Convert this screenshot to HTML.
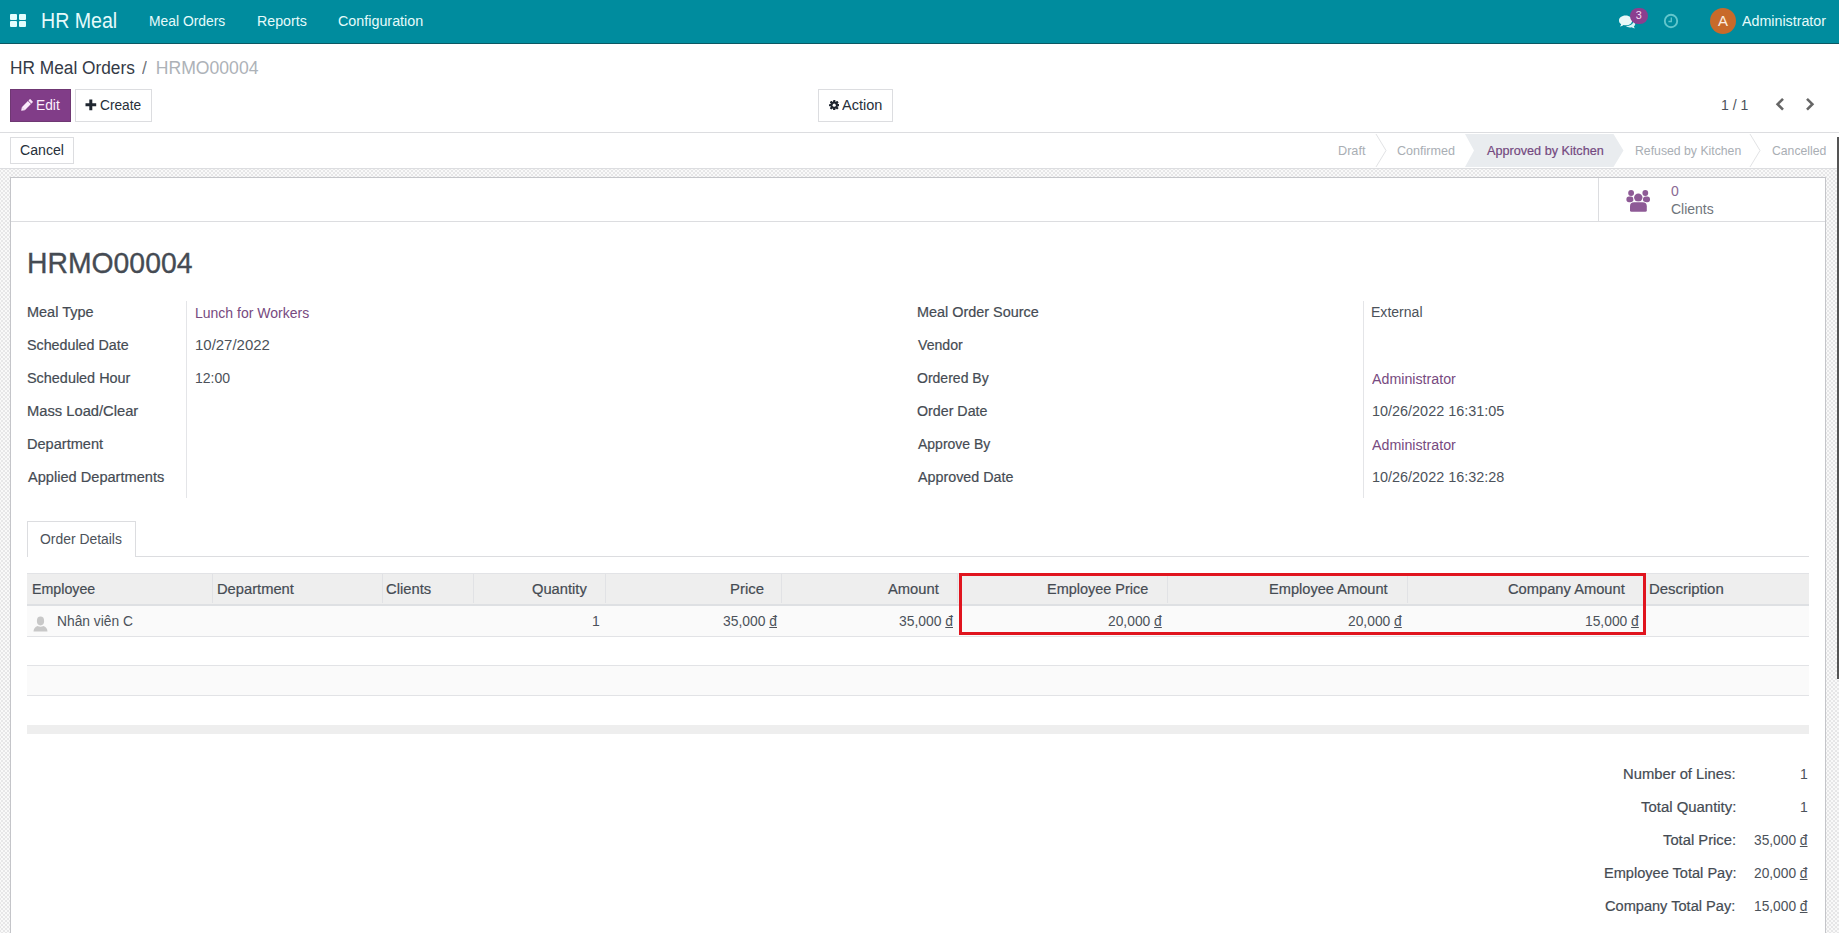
<!DOCTYPE html>
<html><head><meta charset="utf-8"><title>HR Meal Orders</title>
<style>
html,body{margin:0;padding:0;width:1839px;height:933px;overflow:hidden;background:#fff;}
body{position:relative;font-family:"Liberation Sans", sans-serif;}
.t{position:absolute;white-space:nowrap;line-height:1;transform-origin:0 0;}
.u{text-decoration:underline;text-underline-offset:1px;}
.checker{background:repeating-conic-gradient(#e6e6e7 0% 25%,#f9f9f9 0% 50%) 1px 1px/4px 4px;}
</style></head><body>
<div class="checker" style="position:absolute;left:0;top:169px;width:1839px;height:764px"></div>
<div style="position:absolute;left:10px;top:177px;width:1816px;height:800px;background:#fff;border:1px solid #c4c5c9;box-sizing:border-box"></div>
<div style="position:absolute;left:0px;top:0px;width:1839px;height:43px;background:#008c9e"></div>
<div style="position:absolute;left:0px;top:43px;width:1839px;height:1px;background:#0b5863"></div>
<div style="position:absolute;left:0px;top:132px;width:1839px;height:1px;background:#dcdde0"></div>
<div style="position:absolute;left:0px;top:168px;width:1839px;height:1px;background:#dcdde0"></div>
<div style="position:absolute;left:10px;top:14px;width:7px;height:6px;background:#e3fdfd;border-radius:1px"></div>
<div style="position:absolute;left:19px;top:14px;width:7px;height:6px;background:#e3fdfd;border-radius:1px"></div>
<div style="position:absolute;left:10px;top:21px;width:7px;height:6px;background:#e3fdfd;border-radius:1px"></div>
<div style="position:absolute;left:19px;top:21px;width:7px;height:6px;background:#e3fdfd;border-radius:1px"></div>
<svg style="position:absolute;left:1617px;top:13px" width="22" height="17" viewBox="0 0 22 17">
<path d="M9 12.2 C12.6 12.2 15.2 10 15.2 7.4 C15.2 4.8 12.6 2.4 8.6 2.4 C4.6 2.4 2 4.8 2 7.4 C2 9 2.8 10.3 4.2 11.2 C4 12.2 3.4 12.8 2.8 13.4 C4.3 13.4 5.8 12.8 6.6 12 C7.4 12.1 8.2 12.2 9 12.2 Z" fill="#e9f8f8"/>
<path d="M16.4 8.2 C17.6 8.8 18.2 9.8 18.2 11 C18.2 12 17.7 12.8 16.8 13.5 C17 14.3 17.6 14.8 18 15.2 C16.8 15.2 15.6 14.8 14.9 14.2 C14.3 14.3 13.7 14.4 13 14.4 C11.3 14.4 9.8 13.8 8.9 13 C12.8 13 16.4 11 16.4 8.2 Z" fill="#d8f6f6"/>
</svg>
<div style="position:absolute;left:1630px;top:8px;width:18px;height:16px;background:#8b3f8f;border-radius:8px"></div>
<svg style="position:absolute;left:1663px;top:12.8px" width="16" height="16" viewBox="0 0 16 16">
<circle cx="8" cy="8" r="6.2" fill="none" stroke="#62c6cc" stroke-width="1.9"/>
<path d="M8.3 4.4 V8.5 H5.4" fill="none" stroke="#62c6cc" stroke-width="1.3"/>
</svg>
<div style="position:absolute;left:1710px;top:8px;width:26px;height:26px;background:#c86a2a;border-radius:50%"></div>
<div style="position:absolute;left:10px;top:89px;width:61px;height:33px;background:#813d88;border:1px solid #6f3873;box-sizing:border-box"></div>
<svg style="position:absolute;left:19px;top:97px" width="16" height="16" viewBox="0 0 16 16">
<g transform="translate(8 8) rotate(-45)" fill="#fbe9fb">
<path d="M-8.2 0 L-5.2 -2.15 V2.15 Z"/>
<rect x="-5.2" y="-2.15" width="8.6" height="4.3"/>
<rect x="4.1" y="-2.15" width="2.4" height="4.3" rx="0.6"/>
</g></svg>
<div style="position:absolute;left:75px;top:89px;width:77px;height:33px;background:#fff;border:1px solid #dcdde0;box-sizing:border-box"></div>
<svg style="position:absolute;left:85px;top:98.5px" width="12" height="12" viewBox="0 0 12 12">
<path d="M4.3 0.5 H7.3 V4.3 H11.2 V7.3 H7.3 V11.3 H4.3 V7.3 H0.5 V4.3 H4.3 Z" fill="#1f2630"/>
</svg>
<div style="position:absolute;left:818px;top:89px;width:75px;height:33px;background:#fff;border:1px solid #dcdde0;box-sizing:border-box"></div>
<svg style="position:absolute;left:829px;top:99.6px" width="10.4" height="10.4" viewBox="0 0 11 11">
<g fill="#1f2630"><circle cx="5.5" cy="5.5" r="3.8"/>
<rect x="4.3" y="0" width="2.4" height="11" rx="0.5"/><rect x="0" y="4.3" width="11" height="2.4" rx="0.5"/>
<rect x="4.3" y="0" width="2.4" height="11" rx="0.5" transform="rotate(45 5.5 5.5)"/><rect x="4.3" y="0" width="2.4" height="11" rx="0.5" transform="rotate(-45 5.5 5.5)"/></g>
<circle cx="5.5" cy="5.5" r="1.7" fill="#fff"/>
</svg>
<svg style="position:absolute;left:1774px;top:97px" width="44" height="15" viewBox="0 0 44 15">
<path d="M9 1.8 L3.6 7.2 L9 12.6" fill="none" stroke="#666" stroke-width="2.6"/>
<path d="M33 1.8 L38.4 7.2 L33 12.6" fill="none" stroke="#666" stroke-width="2.6"/>
</svg>
<div style="position:absolute;left:10px;top:137px;width:64px;height:27px;background:#fff;border:1px solid #dcdde0;box-sizing:border-box"></div>
<svg style="position:absolute;left:1300px;top:133px" width="539" height="35" viewBox="0 0 539 35">
<path d="M165 1 H313.5 L323.5 17.5 L313.5 34 H165 L174 17.5 Z" fill="#e9ecef"/>
<path d="M76 1 L86 17.5 L76 34" fill="none" stroke="#e2e3e5" stroke-width="1"/>
<path d="M450 1 L460 17.5 L450 34" fill="none" stroke="#e2e3e5" stroke-width="1"/>
</svg>
<div style="position:absolute;left:11px;top:221px;width:1814px;height:1px;background:#dcdde0"></div>
<div style="position:absolute;left:1598px;top:178px;width:1px;height:43px;background:#dcdde0"></div>
<svg style="position:absolute;left:1626px;top:189px" width="25" height="23" viewBox="0 0 25 23">
<g fill="#8e5a96">
<circle cx="5.1" cy="4" r="2.9"/><circle cx="19.3" cy="4" r="2.9"/>
<rect x="0.4" y="7.6" width="7" height="5.6" rx="2.6"/><rect x="17" y="7.6" width="7" height="5.6" rx="2.6"/>
<circle cx="12.3" cy="8.6" r="4.2" stroke="#fff" stroke-width="1.4" paint-order="stroke"/>
<path d="M4 21.2 V17.3 Q4 13.2 8.2 13.2 H16.6 Q20.8 13.2 20.8 17.3 V21.2 Q20.8 22.7 19.3 22.7 H5.5 Q4 22.7 4 21.2 Z" stroke="#fff" stroke-width="1.4" paint-order="stroke"/>
</g></svg>
<div style="position:absolute;left:186px;top:301px;width:1px;height:197px;background:#e4e5e8"></div>
<div style="position:absolute;left:1363px;top:301px;width:1px;height:197px;background:#e4e5e8"></div>
<div style="position:absolute;left:27px;top:556px;width:1782px;height:1px;background:#dcdde0"></div>
<div style="position:absolute;left:27px;top:521px;width:109px;height:36px;background:#fff;border:1px solid #dcdde0;border-bottom:none;box-sizing:border-box"></div>
<div style="position:absolute;left:27px;top:573px;width:1782px;height:31px;background:#eeeeee"></div>
<div style="position:absolute;left:27px;top:573px;width:1782px;height:1px;background:#e2e3e6"></div>
<div style="position:absolute;left:27px;top:604px;width:1782px;height:2px;background:#dee0e3"></div>
<div style="position:absolute;left:212px;top:574px;width:1px;height:29px;background:#e1e2e5"></div>
<div style="position:absolute;left:382px;top:574px;width:1px;height:29px;background:#e1e2e5"></div>
<div style="position:absolute;left:473px;top:574px;width:1px;height:29px;background:#e1e2e5"></div>
<div style="position:absolute;left:605px;top:574px;width:1px;height:29px;background:#e1e2e5"></div>
<div style="position:absolute;left:781px;top:574px;width:1px;height:29px;background:#e1e2e5"></div>
<div style="position:absolute;left:957px;top:574px;width:1px;height:29px;background:#e1e2e5"></div>
<div style="position:absolute;left:1167px;top:574px;width:1px;height:29px;background:#e1e2e5"></div>
<div style="position:absolute;left:1407px;top:574px;width:1px;height:29px;background:#e1e2e5"></div>
<div style="position:absolute;left:1645px;top:574px;width:1px;height:29px;background:#e1e2e5"></div>
<div style="position:absolute;left:27px;top:606px;width:1782px;height:30px;background:#fafafa"></div>
<div style="position:absolute;left:27px;top:636px;width:1782px;height:1px;background:#e2e3e6"></div>
<svg style="position:absolute;left:33px;top:616px" width="15" height="16" viewBox="0 0 15 16">
<g fill="#c8c8c8"><ellipse cx="7.5" cy="5" rx="3.6" ry="4.4"/><path d="M0.5 15.5 Q0.8 11 4.6 10 Q7.5 11.6 10.4 10 Q14.2 11 14.5 15.5 Z"/></g></svg>
<div style="position:absolute;left:27px;top:665px;width:1782px;height:1px;background:#e2e3e6"></div>
<div style="position:absolute;left:27px;top:666px;width:1782px;height:29px;background:#fafafa"></div>
<div style="position:absolute;left:27px;top:695px;width:1782px;height:1px;background:#e2e3e6"></div>
<div style="position:absolute;left:27px;top:725px;width:1782px;height:9px;background:#eeeeee"></div>
<div class="t" style="left:41.19px;top:10px;font-size:21.6px;color:#e6fbfb;transform:scaleX(0.9074);">HR Meal</div>
<div class="t" style="left:148.58px;top:13px;font-size:15.1px;color:#e6fbfb;transform:scaleX(0.9183);">Meal Orders</div>
<div class="t" style="left:256.86px;top:13px;font-size:15.1px;color:#e6fbfb;transform:scaleX(0.9431);">Reports</div>
<div class="t" style="left:337.75px;top:13px;font-size:15.1px;color:#e6fbfb;transform:scaleX(0.9489);">Configuration</div>
<div class="t" style="left:1741.60px;top:13px;font-size:15.1px;color:#e6fbfb;transform:scaleX(0.9449);">Administrator</div>
<div class="t" style="left:1635.70px;top:10px;font-size:10.8px;color:#f5dcf5;">3</div>
<div class="t" style="left:1718.00px;top:13px;font-size:15px;color:#fbeee0;">A</div>
<div class="t" style="left:10.02px;top:60px;font-size:17.6px;color:#343a46;transform:scaleX(0.9825);">HR Meal Orders</div>
<div class="t" style="left:142.40px;top:60px;font-size:17.6px;color:#6f747a;transform:scaleX(0.9908);">/</div>
<div class="t" style="left:155.80px;top:60px;font-size:17.6px;color:#adb2b8;">HRMO00004</div>
<div class="t" style="left:36.09px;top:97px;font-size:15.1px;color:#fdf0fd;transform:scaleX(0.9120);">Edit</div>
<div class="t" style="left:100.09px;top:97px;font-size:15.1px;color:#27303a;transform:scaleX(0.9091);">Create</div>
<div class="t" style="left:842.20px;top:97px;font-size:15.1px;color:#27303a;transform:scaleX(0.9610);">Action</div>
<div class="t" style="left:1720.57px;top:97px;font-size:15.1px;color:#4c525a;transform:scaleX(0.9286);">1 / 1</div>
<div class="t" style="left:20.26px;top:142px;font-size:15.1px;color:#27303a;transform:scaleX(0.9356);">Cancel</div>
<div class="t" style="left:1338.25px;top:144px;font-size:13.4px;color:#a9aeb4;transform:scaleX(0.9464);">Draft</div>
<div class="t" style="left:1397.36px;top:144px;font-size:13.4px;color:#a9aeb4;transform:scaleX(0.9383);">Confirmed</div>
<div class="t" style="left:1487.20px;top:144px;font-size:13.4px;color:#74497f;-webkit-text-stroke:0.2px #74497f;transform:scaleX(0.9447);">Approved by Kitchen</div>
<div class="t" style="left:1634.79px;top:144px;font-size:13.4px;color:#a9aeb4;transform:scaleX(0.9149);">Refused by Kitchen</div>
<div class="t" style="left:1771.69px;top:144px;font-size:13.4px;color:#a9aeb4;transform:scaleX(0.9121);">Cancelled</div>
<div class="t" style="left:1670.87px;top:183px;font-size:15.1px;color:#8a6a94;transform:scaleX(0.9291);">0</div>
<div class="t" style="left:1670.87px;top:201px;font-size:15.1px;color:#6f757c;transform:scaleX(0.9267);">Clients</div>
<div class="t" style="left:26.60px;top:248px;font-size:29.9px;color:#454b53;-webkit-text-stroke:0.35px #454b53;transform:scaleX(0.9483);">HRMO00004</div>
<div class="t" style="left:27.04px;top:304px;font-size:15.1px;color:#454b53;-webkit-text-stroke:0.2px #454b53;transform:scaleX(0.9588);">Meal Type</div>
<div class="t" style="left:27.05px;top:337px;font-size:15.1px;color:#454b53;-webkit-text-stroke:0.2px #454b53;transform:scaleX(0.9462);">Scheduled Date</div>
<div class="t" style="left:27.04px;top:370px;font-size:15.1px;color:#454b53;-webkit-text-stroke:0.2px #454b53;transform:scaleX(0.9551);">Scheduled Hour</div>
<div class="t" style="left:27.02px;top:403px;font-size:15.1px;color:#454b53;-webkit-text-stroke:0.2px #454b53;transform:scaleX(0.9752);">Mass Load/Clear</div>
<div class="t" style="left:27.04px;top:436px;font-size:15.1px;color:#454b53;-webkit-text-stroke:0.2px #454b53;transform:scaleX(0.9641);">Department</div>
<div class="t" style="left:27.60px;top:469px;font-size:15.1px;color:#454b53;-webkit-text-stroke:0.2px #454b53;transform:scaleX(0.9667);">Applied Departments</div>
<div class="t" style="left:194.67px;top:305px;font-size:15.1px;color:#774a80;transform:scaleX(0.9279);">Lunch for Workers</div>
<div class="t" style="left:194.91px;top:337px;font-size:15.1px;color:#4c525a;transform:scaleX(0.9905);">10/27/2022</div>
<div class="t" style="left:194.77px;top:370px;font-size:15.1px;color:#4c525a;transform:scaleX(0.9306);">12:00</div>
<div class="t" style="left:917.45px;top:304px;font-size:15.1px;color:#454b53;-webkit-text-stroke:0.2px #454b53;transform:scaleX(0.9548);">Meal Order Source</div>
<div class="t" style="left:918.40px;top:337px;font-size:15.1px;color:#454b53;-webkit-text-stroke:0.2px #454b53;transform:scaleX(0.9354);">Vendor</div>
<div class="t" style="left:917.47px;top:370px;font-size:15.1px;color:#454b53;-webkit-text-stroke:0.2px #454b53;transform:scaleX(0.9289);">Ordered By</div>
<div class="t" style="left:917.46px;top:403px;font-size:15.1px;color:#454b53;-webkit-text-stroke:0.2px #454b53;transform:scaleX(0.9438);">Order Date</div>
<div class="t" style="left:918.40px;top:436px;font-size:15.1px;color:#454b53;-webkit-text-stroke:0.2px #454b53;transform:scaleX(0.9269);">Approve By</div>
<div class="t" style="left:918.40px;top:469px;font-size:15.1px;color:#454b53;-webkit-text-stroke:0.2px #454b53;transform:scaleX(0.9470);">Approved Date</div>
<div class="t" style="left:1371.27px;top:304px;font-size:15.1px;color:#4c525a;transform:scaleX(0.9302);">External</div>
<div class="t" style="left:1372.20px;top:371px;font-size:15.1px;color:#774a80;transform:scaleX(0.9427);">Administrator</div>
<div class="t" style="left:1371.64px;top:403px;font-size:15.1px;color:#4c525a;transform:scaleX(0.9555);">10/26/2022 16:31:05</div>
<div class="t" style="left:1372.20px;top:437px;font-size:15.1px;color:#774a80;transform:scaleX(0.9427);">Administrator</div>
<div class="t" style="left:1371.64px;top:469px;font-size:15.1px;color:#4c525a;transform:scaleX(0.9555);">10/26/2022 16:32:28</div>
<div class="t" style="left:40.48px;top:531px;font-size:15.1px;color:#4c525a;transform:scaleX(0.9207);">Order Details</div>
<div class="t" style="left:31.86px;top:581px;font-size:15.1px;color:#454b53;-webkit-text-stroke:0.2px #454b53;transform:scaleX(0.9424);">Employee</div>
<div class="t" style="left:216.63px;top:581px;font-size:15.1px;color:#454b53;-webkit-text-stroke:0.2px #454b53;transform:scaleX(0.9744);">Department</div>
<div class="t" style="left:386.32px;top:581px;font-size:15.1px;color:#454b53;-webkit-text-stroke:0.2px #454b53;transform:scaleX(0.9778);">Clients</div>
<div class="t" style="left:532.03px;top:581px;font-size:15.1px;color:#454b53;-webkit-text-stroke:0.2px #454b53;transform:scaleX(0.9745);">Quantity</div>
<div class="t" style="left:729.51px;top:581px;font-size:15.1px;color:#454b53;-webkit-text-stroke:0.2px #454b53;transform:scaleX(0.9879);">Price</div>
<div class="t" style="left:888.20px;top:581px;font-size:15.1px;color:#454b53;-webkit-text-stroke:0.2px #454b53;transform:scaleX(0.9750);">Amount</div>
<div class="t" style="left:1047.44px;top:581px;font-size:15.1px;color:#454b53;-webkit-text-stroke:0.2px #454b53;transform:scaleX(0.9577);">Employee Price</div>
<div class="t" style="left:1269.23px;top:581px;font-size:15.1px;color:#454b53;-webkit-text-stroke:0.2px #454b53;transform:scaleX(0.9680);">Employee Amount</div>
<div class="t" style="left:1508.33px;top:581px;font-size:15.1px;color:#454b53;-webkit-text-stroke:0.2px #454b53;transform:scaleX(0.9731);">Company Amount</div>
<div class="t" style="left:1648.51px;top:581px;font-size:15.1px;color:#454b53;-webkit-text-stroke:0.2px #454b53;transform:scaleX(0.9892);">Description</div>
<div class="t" style="left:57.09px;top:613px;font-size:15.1px;color:#4c525a;transform:scaleX(0.9136);">Nhân viên C</div>
<div class="t" style="left:592.17px;top:613px;font-size:15.1px;color:#4c525a;transform:scaleX(0.9291);">1</div>
<div class="t" style="left:723.08px;top:613px;font-size:15.1px;color:#4c525a;transform:scaleX(0.9190);">35,000 <span class="u">đ</span></div>
<div class="t" style="left:899.28px;top:613px;font-size:15.1px;color:#4c525a;transform:scaleX(0.9190);">35,000 <span class="u">đ</span></div>
<div class="t" style="left:1108.08px;top:613px;font-size:15.1px;color:#4c525a;transform:scaleX(0.9155);">20,000 <span class="u">đ</span></div>
<div class="t" style="left:1348.28px;top:613px;font-size:15.1px;color:#4c525a;transform:scaleX(0.9155);">20,000 <span class="u">đ</span></div>
<div class="t" style="left:1585.38px;top:613px;font-size:15.1px;color:#4c525a;transform:scaleX(0.9155);">15,000 <span class="u">đ</span></div>
<div class="t" style="left:1623.32px;top:766px;font-size:15.1px;color:#454b53;-webkit-text-stroke:0.2px #454b53;transform:scaleX(0.9788);">Number of Lines:</div>
<div class="t" style="left:1641.00px;top:799px;font-size:15.1px;color:#454b53;-webkit-text-stroke:0.2px #454b53;transform:scaleX(0.9884);">Total Quantity:</div>
<div class="t" style="left:1662.50px;top:832px;font-size:15.1px;color:#454b53;-webkit-text-stroke:0.2px #454b53;transform:scaleX(0.9784);">Total Price:</div>
<div class="t" style="left:1603.63px;top:865px;font-size:15.1px;color:#454b53;-webkit-text-stroke:0.2px #454b53;transform:scaleX(0.9652);">Employee Total Pay:</div>
<div class="t" style="left:1605.43px;top:898px;font-size:15.1px;color:#454b53;-webkit-text-stroke:0.2px #454b53;transform:scaleX(0.9662);">Company Total Pay:</div>
<div class="t" style="left:1799.77px;top:766px;font-size:15.1px;color:#4c525a;transform:scaleX(0.9291);">1</div>
<div class="t" style="left:1799.77px;top:799px;font-size:15.1px;color:#4c525a;transform:scaleX(0.9291);">1</div>
<div class="t" style="left:1754.29px;top:832px;font-size:15.1px;color:#4c525a;transform:scaleX(0.9103);">35,000 <span class="u">đ</span></div>
<div class="t" style="left:1754.29px;top:865px;font-size:15.1px;color:#4c525a;transform:scaleX(0.9103);">20,000 <span class="u">đ</span></div>
<div class="t" style="left:1754.29px;top:898px;font-size:15.1px;color:#4c525a;transform:scaleX(0.9103);">15,000 <span class="u">đ</span></div>
<div style="position:absolute;left:959px;top:573px;width:687px;height:62px;border:3px solid #e0141e;box-sizing:border-box"></div>
<div style="position:absolute;left:1837px;top:137px;width:2px;height:542px;background:#555"></div>
</body></html>
